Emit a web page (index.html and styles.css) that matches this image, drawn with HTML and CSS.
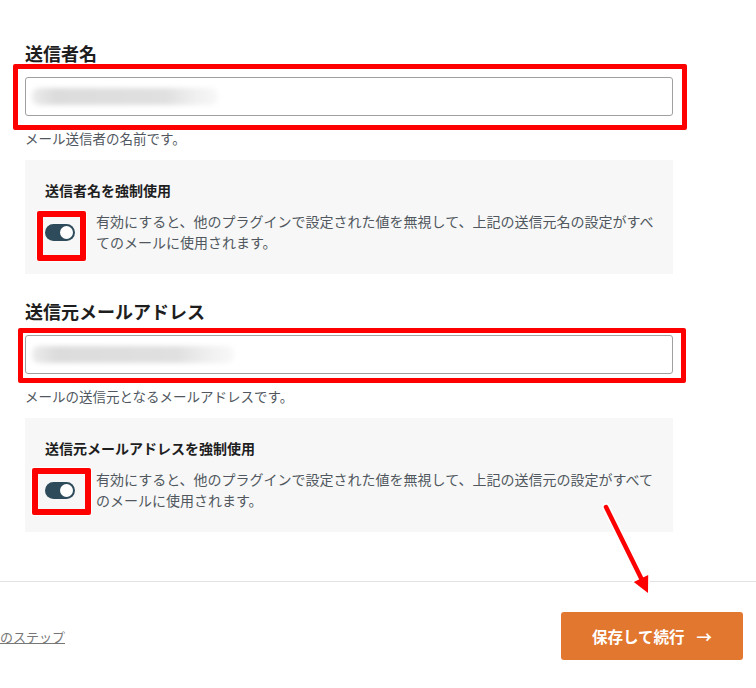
FILE: index.html
```html
<!DOCTYPE html>
<html lang="ja">
<head>
<meta charset="utf-8">
<title>送信者設定</title>
<link rel="stylesheet" href="styles.css">
</head>
<body>
<main class="settings">
  <section class="field">
    <h2 class="field-title">送信者名</h2>
    <div class="text-input">
      <span class="blurred blurred-name"></span>
    </div>
    <p class="field-desc">メール送信者の名前です。</p>
    <div class="force-box">
      <h3 class="force-title">送信者名を強制使用</h3>
      <div class="force-row">
        <span class="toggle"><span class="knob"></span></span>
        <p class="force-text">有効にすると、他のプラグインで設定された値を無視して、上記の送信元名の設定がすべてのメールに使用されます。</p>
      </div>
    </div>
  </section>
  <section class="field field-second">
    <h2 class="field-title">送信元メールアドレス</h2>
    <div class="text-input">
      <span class="blurred blurred-mail"></span>
    </div>
    <p class="field-desc">メールの送信元となるメールアドレスです。</p>
    <div class="force-box">
      <h3 class="force-title">送信元メールアドレスを強制使用</h3>
      <div class="force-row">
        <span class="toggle"><span class="knob"></span></span>
        <p class="force-text">有効にすると、他のプラグインで設定された値を無視して、上記の送信元の設定がすべてのメールに使用されます。</p>
      </div>
    </div>
  </section>
</main>
<footer class="footer">
  <a class="prev-link" href="#">のステップ</a>
  <button class="btn-next" type="button">保存して続行<span class="btn-arrow">→</span></button>
</footer>

<div class="annot annot-input1"></div>
<div class="annot annot-input2"></div>
<div class="annot annot-toggle1"></div>
<div class="annot annot-toggle2"></div>
<svg class="annot-arrow" width="756" height="688" viewBox="0 0 756 688">
  <line x1="606" y1="507" x2="642" y2="580" stroke="#ffffff" stroke-width="8" stroke-linecap="round"/>
  <polygon points="648,593 648.2,575.1 633.8,582.1" fill="#ffffff" stroke="#ffffff" stroke-width="3" stroke-linejoin="round"/>
  <line x1="606" y1="507" x2="642" y2="580" stroke="#ff0000" stroke-width="4.5" stroke-linecap="round"/>
  <polygon points="648,593 648.2,575.1 633.8,582.1" fill="#ff0000"/>
</svg>
</body>
</html>
```

FILE: styles.css
```css
html, body {
  margin: 0;
  padding: 0;
}

body {
  width: 756px;
  height: 688px;
  overflow: hidden;
  background: #ffffff;
  font-family: "Noto Sans CJK JP", "Noto Sans", sans-serif;
  color: #1e1e1e;
  position: relative;
}

.settings {
  padding: 40px 0 0 25px;
  width: 648px;
}

.field-second {
  margin-top: 24px;
}

.field-title {
  margin: 0 0 10px;
  font-size: 18px;
  line-height: 27px;
  font-weight: 700;
  color: #1e1e1e;
}

.text-input {
  box-sizing: border-box;
  height: 39px;
  border: 1px solid #a0a0a0;
  border-radius: 3px;
  background: #ffffff;
  display: flex;
  align-items: center;
  padding-left: 6px;
}

.blurred {
  display: inline-block;
  height: 17px;
  background: linear-gradient(90deg, #ececec 0%, #dcdcdc 12%, #e0e0e0 72%, #f0f0f0 88%, #f8f8f8 100%);
  filter: blur(2.5px);
  border-radius: 7px;
}

.blurred-name {
  width: 186px;
}

.blurred-mail {
  width: 202px;
}

.field-desc {
  margin: 12px 0 0;
  font-size: 13.5px;
  line-height: 20px;
  color: #50575e;
}

.force-box {
  margin-top: 12px;
  background: #f7f7f7;
  padding: 20px 14px 21px 20px;
}

.force-title {
  margin: 0 0 10px;
  font-size: 14px;
  line-height: 21px;
  font-weight: 600;
  color: #1e1e1e;
}

.force-row {
  display: flex;
  align-items: center;
}

.toggle {
  flex: none;
  box-sizing: border-box;
  width: 30px;
  height: 17px;
  border-radius: 9px;
  background: #2d4b5b;
  display: flex;
  align-items: center;
  justify-content: flex-end;
  padding-right: 2px;
  margin-right: 21px;
}

.knob {
  width: 13px;
  height: 13px;
  border-radius: 50%;
  background: #ffffff;
}

.force-text {
  margin: 0;
  font-size: 14px;
  line-height: 21px;
  color: #50575e;
}

.footer {
  margin-top: 49px;
  border-top: 1px solid #e2e2e2;
  padding: 30px 13px 0 0;
  display: flex;
  justify-content: space-between;
  align-items: center;
}

.prev-link {
  font-size: 13px;
  color: #777777;
  text-decoration: underline;
}

.btn-next {
  width: 182px;
  height: 48px;
  border: none;
  border-radius: 3px;
  background: #e27730;
  color: #ffffff;
  font-family: "Noto Sans CJK JP", "Noto Sans", sans-serif;
  font-size: 15.5px;
  font-weight: 700;
  display: flex;
  align-items: center;
  justify-content: center;
  padding: 0;
}

.btn-arrow {
  margin-left: 12px;
  font-weight: 700;
}

/* annotation overlays */
.annot {
  position: absolute;
  box-sizing: border-box;
  border: 5px solid #ff0000;
  border-radius: 2px;
  box-shadow: 0 0 0 1px #ffffff;
  pointer-events: none;
}

.annot-input1 {
  left: 13px;
  top: 64px;
  width: 674px;
  height: 66px;
}

.annot-input2 {
  left: 18px;
  top: 328px;
  width: 668px;
  height: 55px;
}

.annot-toggle1 {
  left: 37px;
  top: 211px;
  width: 49px;
  height: 50px;
  border-width: 6px;
}

.annot-toggle2 {
  left: 32px;
  top: 468px;
  width: 59px;
  height: 47px;
  border-width: 6px;
}

.annot-arrow {
  position: absolute;
  left: 0;
  top: 0;
  pointer-events: none;
}
```
